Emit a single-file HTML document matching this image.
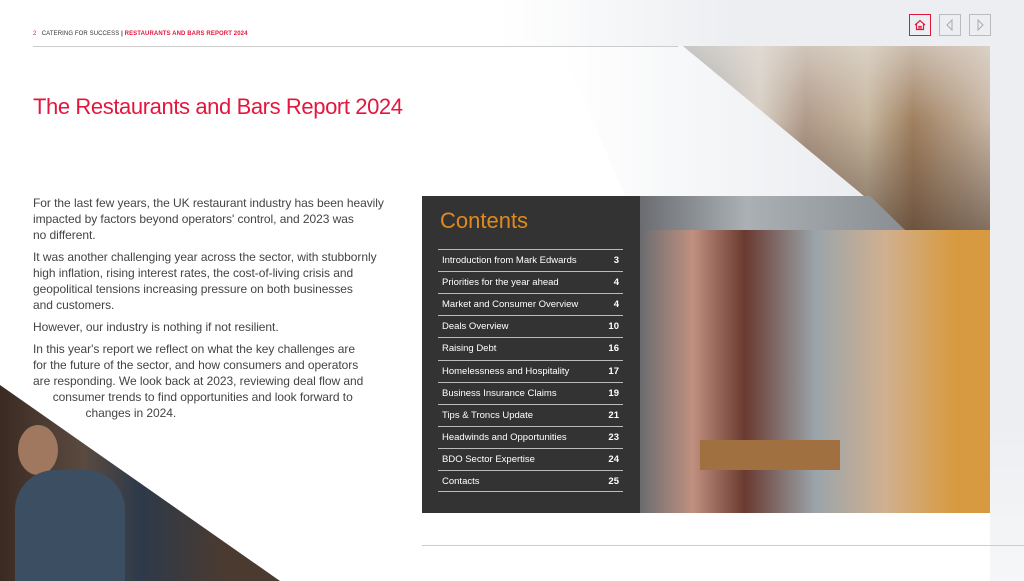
<!DOCTYPE html>
<html><head><meta charset="utf-8"><style>
*{margin:0;padding:0;box-sizing:border-box}
body{width:1024px;height:581px;overflow:hidden;background:#fff;font-family:"Liberation Sans",sans-serif;position:relative}
.abs{position:absolute}
.hdr{left:33px;top:31px;font-size:6px;color:#333;letter-spacing:.1px}
.hdr b{color:#e3173e}
h1{position:absolute;left:33px;top:94px;font-weight:normal;font-size:22px;color:#e3173e;letter-spacing:-.4px}
.body{left:33px;top:195px;width:380px;font-size:12px;color:#444;line-height:16px;letter-spacing:-.05px}
.body p{margin-bottom:6px}
.box{left:422px;top:196px;width:218px;height:317px;background:#333}
.box h2{position:absolute;left:18px;top:12px;font-weight:normal;color:#e08a1e;font-size:22px}
.row{position:absolute;left:16px;width:185px;height:22px;border-top:1px solid #bbb;color:#fff;font-size:9.5px;line-height:21px;padding-left:4px}
.row span{position:absolute;right:4px;font-weight:bold}
.btn{top:14px;width:22px;height:22px;border:1px solid #bbb}
</style></head><body>
<div class="abs" style="left:500px;top:0;width:524px;height:46px;background:linear-gradient(90deg,#fff,#eceef1 45%)"></div>
<div class="abs" style="left:990px;top:46px;width:34px;height:535px;background:linear-gradient(180deg,#eceef1,#eceef1 70%,#f6f7f8)"></div>
<div class="abs" style="left:560px;top:46px;width:345px;height:184px;clip-path:polygon(0 0,123px 0,345px 100%,80px 100%);background:linear-gradient(90deg,#fff,#e8eaee)"></div>
<div class="abs hdr"><span style="color:#e3173e">2</span>&nbsp;&nbsp;&nbsp;CATERING FOR SUCCESS <b style="color:#333">|</b> <b>RESTAURANTS AND BARS REPORT 2024</b></div>
<div class="abs" style="left:33px;top:46px;width:645px;height:1px;background:#ccc"></div>
<div class="abs" style="left:422px;top:545px;width:602px;height:1px;background:#ccc"></div>
<h1>The Restaurants and Bars Report 2024</h1>
<div class="abs body">
<p>For the last few years, the UK restaurant industry has been heavily<br>impacted by factors beyond operators' control, and 2023 was<br>no different.</p>
<p>It was another challenging year across the sector, with stubbornly<br>high inflation, rising interest rates, the cost-of-living crisis and<br>geopolitical tensions increasing pressure on both businesses<br>and customers.</p>
<p>However, our industry is nothing if not resilient.</p>
<p>In this year's report we reflect on what the key challenges are<br>for the future of the sector, and how consumers and operators<br>are responding. We look back at 2023, reviewing deal flow and<br>&nbsp;&nbsp;&nbsp;&nbsp;&nbsp;&nbsp;consumer trends to find opportunities and look forward to<br>&nbsp;&nbsp;&nbsp;&nbsp;&nbsp;&nbsp;&nbsp;&nbsp;&nbsp;&nbsp;&nbsp;&nbsp;&nbsp;&nbsp;&nbsp;&nbsp;changes in 2024.</p>
</div>
<div class="abs" style="left:0;top:385px;width:280px;height:196px;clip-path:polygon(0 0,100% 100%,0 100%);background:linear-gradient(90deg,#3a2a22,#5a4a40 30%,#2d3a4a 50%,#4a3a30 80%)"></div>
<div class="abs" style="left:18px;top:425px;width:40px;height:50px;border-radius:50%;background:#a07860"></div>
<div class="abs" style="left:15px;top:470px;width:110px;height:111px;border-radius:40px 40px 0 0;background:#3c4e62"></div>
<div class="abs" style="left:683px;top:46px;width:307px;height:184px;clip-path:polygon(0 0,100% 0,100% 100%,222px 100%);background:linear-gradient(180deg,rgba(230,225,220,.6),rgba(0,0,0,0) 40%,rgba(60,40,30,.5)),linear-gradient(90deg,#9aa0a4,#d8cfc4 25%,#b09a88 40%,#c8b8a0 60%,#a08060 75%,#c9b8a6)"></div>
<div class="abs" style="left:640px;top:230px;width:350px;height:283px;background:linear-gradient(90deg,#6a6c70,#c09080 15%,#6a3a30 30%,#9aa4aa 50%,#d0b090 70%,#d89a40 90%);"></div>
<div class="abs" style="left:640px;top:196px;width:265px;height:34px;clip-path:polygon(0 0,230px 0,265px 100%,0 100%);background:linear-gradient(90deg,#6a6c70,#aab0b4 40%,#8a8e92)"></div>
<div class="abs" style="left:700px;top:440px;width:140px;height:30px;background:#a07040"></div>
<div class="abs box"><h2>Contents</h2>
<div class="row" style="top:53px">Introduction from Mark Edwards<span>3</span></div>
<div class="row" style="top:75px">Priorities for the year ahead<span>4</span></div>
<div class="row" style="top:97px">Market and Consumer Overview<span>4</span></div>
<div class="row" style="top:119px">Deals Overview<span>10</span></div>
<div class="row" style="top:141px">Raising Debt<span>16</span></div>
<div class="row" style="top:164px">Homelessness and Hospitality<span>17</span></div>
<div class="row" style="top:186px">Business Insurance Claims<span>19</span></div>
<div class="row" style="top:208px">Tips &amp; Troncs Update<span>21</span></div>
<div class="row" style="top:230px">Headwinds and Opportunities<span>23</span></div>
<div class="row" style="top:252px">BDO Sector Expertise<span>24</span></div>
<div class="row" style="top:274px;border-bottom:1px solid #bbb">Contacts<span>25</span></div>
</div>
<div class="abs btn" style="left:909px;border-color:#e3173e"><svg width="20" height="20" viewBox="0 0 20 20"><path d="M5 10L10 5.5L15 10M6.5 9V14.5H13.5V9M9 14.5V11.5H11V14.5" fill="none" stroke="#e3173e" stroke-width="1.2"/></svg></div>
<div class="abs btn" style="left:939px"><svg width="20" height="20" viewBox="0 0 20 20"><path d="M12 5L7 10L12 15Z" fill="none" stroke="#aaa"/></svg></div>
<div class="abs btn" style="left:969px"><svg width="20" height="20" viewBox="0 0 20 20"><path d="M8 5L13 10L8 15Z" fill="none" stroke="#aaa"/></svg></div>
</body></html>
